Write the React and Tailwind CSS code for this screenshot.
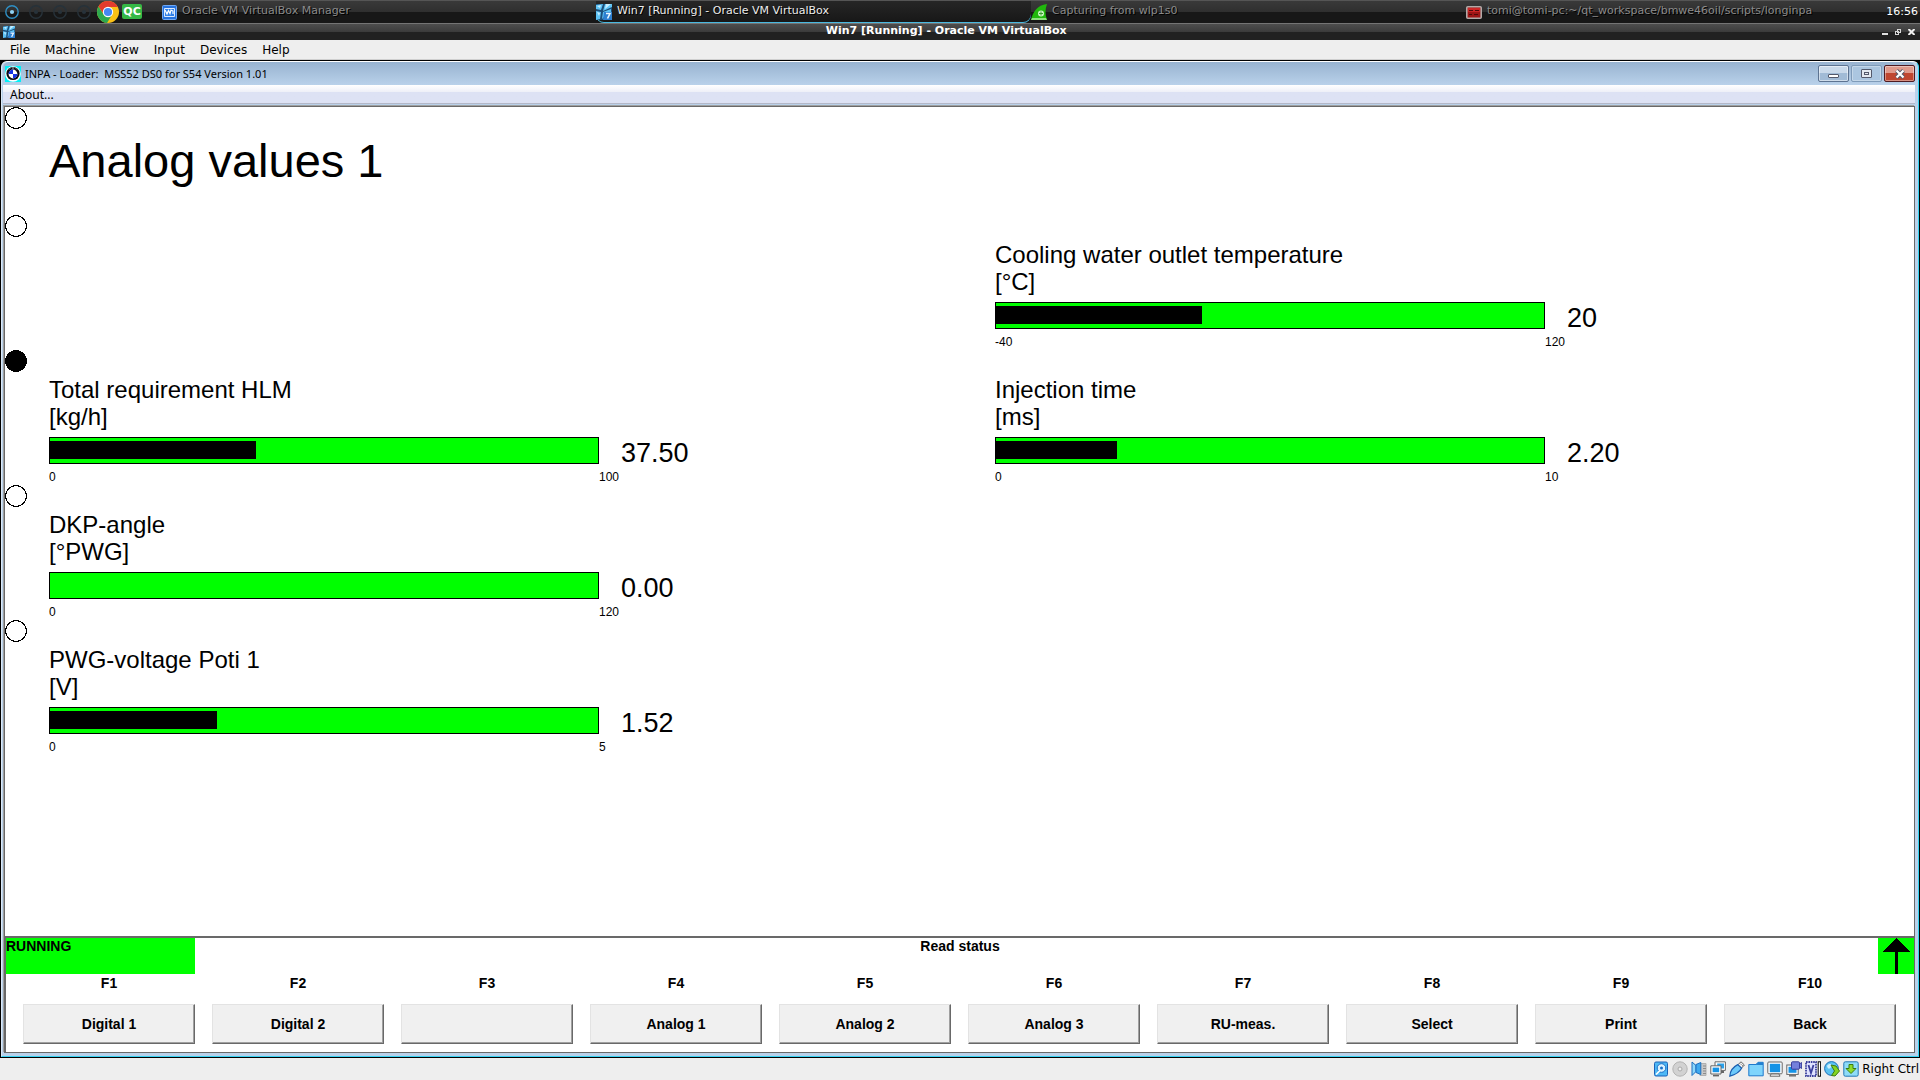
const rows = [
  {
    filled: false,
    left: null,
    right: { label: 'Cooling water outlet temperature', unit: '[°C]', min: -40, max: 120, value: 20, text: '20' },
  },
  {
    filled: true,
    left: { label: 'Total requirement HLM', unit: '[kg/h]', min: 0, max: 100, value: 37.5, text: '37.50' },
    right: { label: 'Injection time', unit: '[ms]', min: 0, max: 10, value: 2.2, text: '2.20' },
  },
  {
    filled: false,
    left: { label: 'DKP-angle', unit: '[°PWG]', min: 0, max: 120, value: 0, text: '0.00' },
    right: null,
  },
  {
    filled: false,
    left: { label: 'PWG-voltage Poti 1', unit: '[V]', min: 0, max: 5, value: 1.52, text: '1.52' },
    right: null,
  },
];

const keys = ['Digital 1', 'Digital 2', '', 'Analog 1', 'Analog 2', 'Analog 3', 'RU-meas.', 'Select', 'Print', 'Back'];
const hostMenus = ['File', 'Machine', 'View', 'Input', 'Devices', 'Help'];

function Dot({ filled }) {
  return (
    <svg width="22" height="22" viewBox="0 0 22 22" className="shrink-0" shapeRendering="crispEdges" aria-hidden="true">
      <circle cx="11" cy="11" r="10.4" fill={filled ? '#000' : '#fff'} stroke="#000" strokeWidth="1" />
    </svg>
  );
}

function Gauge({ data, columns }) {
  const percent = ((data.value - data.min) / (data.max - data.min)) * 100;
  return (
    <section className={'grid content-start pt-[26px] ' + columns}>
      <h2 className="col-span-2 text-[24px] leading-[27px]">
        {data.label}
        <br />
        {data.unit}
      </h2>
      <div className="mt-[7px] flex h-[27px] items-center border border-black bg-[#00ff00]">
        <div className="mb-px h-[18px] bg-black" style={{ width: percent + '%' }} />
      </div>
      <output className="mt-[7px] pl-[22px] text-[27px] leading-[33px]">{data.text}</output>
      <span className="text-[12px] leading-[15px]">{data.min}</span>
      <span className="text-[12px] leading-[15px]">{data.max}</span>
    </section>
  );
}

function Launcher({ dim }) {
  return (
    <svg width="16" height="16" viewBox="0 0 16 16" fill="none" aria-hidden="true">
      <circle cx="8" cy="8" r="6.2" stroke={dim ? '#27323a' : '#2f8fc4'} strokeWidth="1.4" />
      <circle cx="8" cy="8" r="2.1" fill={dim ? '#27323a' : '#8fd3f5'} />
    </svg>
  );
}

function ChromeIcon() {
  return (
    <svg width="22" height="22" viewBox="0 0 22 22" aria-hidden="true">
      <circle cx="11" cy="11" r="11" fill="#fbc116" />
      <path d="M11 6 H20.8 A11 11 0 0 0 1.5 5.5 L6.5 13 Z" fill="#e33b2e" />
      <path d="M1.5 5.5 A11 11 0 0 0 10 22 L15.2 13.6 L6.6 13.4 Z" fill="#2da94f" />
      <circle cx="11" cy="11" r="5.2" fill="#fff" />
      <circle cx="11" cy="11" r="4.1" fill="#4688f4" />
    </svg>
  );
}

function ManagerIcon() {
  return (
    <svg width="15" height="15" viewBox="0 0 15 15" aria-hidden="true">
      <rect x="0.5" y="0.5" width="14" height="14" rx="1" fill="#2672dd" stroke="#6fa8f4" />
      <path d="M2.5 3.5 H12.5 V11.5 H2.5 Z" fill="#2f80ea" stroke="#dcebff" />
      <path d="M3 5 L5 9 L6.5 5.5 L8 8.5 L9 5 L11 6 V9" fill="none" stroke="#fff" strokeWidth="1.2" />
    </svg>
  );
}

function Win7Icon({ size }) {
  return (
    <svg width={size} height={size} viewBox="0 0 16 16" aria-hidden="true">
      <rect width="16" height="16" fill="#1d4e79" />
      <path d="M0 1 L7 0 L5 6 L0 5 Z M9 0 H16 V3 L7 7 Z M0 7 L5 8 L4 15 L0 16 Z M7 8 L15 5 V9 L9 12 L6 15 Z" fill="#5ec3f5" />
      <path d="M10 0 H15 L9 5 Z M1 8 L4 9 L3 12 Z M1 2 L5 1 L4 4 Z" fill="#c5edff" />
      <path d="M8 8 H16 V16 H7 Z" fill="#2d7fd0" />
      <path d="M10 9.5 H14 L11.5 14.5" fill="none" stroke="#e8f6ff" strokeWidth="1.6" />
    </svg>
  );
}

function SharkIcon() {
  return (
    <svg width="16" height="16" viewBox="0 0 16 16" aria-hidden="true">
      <path d="M0 16 C2 8 6 1 16 0 C14 5 14 11 16 16 Z" fill="#20b80c" />
      <path d="M0 16 L1 14 H15 L16 16 Z" fill="#8be07e" />
      <circle cx="10" cy="9.5" r="3" fill="#c9f5c2" />
      <path d="M8 9.5 H12 M10 7.5 V11.5" stroke="#3e9b34" />
    </svg>
  );
}

function TerminalIcon() {
  return (
    <svg width="16" height="13" viewBox="0 0 16 13" aria-hidden="true">
      <rect x="0.8" y="0.8" width="14.4" height="11.4" rx="1" fill="#9d1515" stroke="#b3aaa8" strokeWidth="1.6" />
      <path d="M2 2 H14 V6 H2 Z" fill="#cc2626" />
      <path d="M3 4.5 H7 M9 4.5 H13 M3 8.5 H6 M8 8.5 H12" stroke="#4d0b0b" />
    </svg>
  );
}

function BmwIcon() {
  return (
    <svg width="16" height="16" viewBox="0 0 16 16" aria-hidden="true">
      <rect width="16" height="16" fill="#00f0f8" />
      <circle cx="8" cy="8" r="7.8" fill="#fff" />
      <circle cx="8" cy="7.5" r="6.6" fill="#0b0b14" />
      <path d="M4 3.5 L5 2.5 M7 2 H9 M11 2.5 L12 3.5" stroke="#bbb" />
      <circle cx="8" cy="8" r="4.4" fill="#fff" />
      <path d="M8 8 V3.6 A4.4 4.4 0 0 0 3.6 8 Z M8 8 V12.4 A4.4 4.4 0 0 0 12.4 8 Z" fill="#1432e8" />
    </svg>
  );
}

function Task({ icon, label, active, className }) {
  return (
    <button
      type="button"
      className={'flex h-[22px] items-center gap-[5px] text-left whitespace-nowrap ' + (active ? 'text-[#ececec] ' : 'text-[#8a8a8a] ') + className}
    >
      {icon}
      <span className="pb-[3px] text-[11px] leading-[16px] [text-shadow:1px_1px_0_#000]">{label}</span>
    </button>
  );
}

function HostPanel() {
  return (
    <header className="flex h-[23px] items-start border-t border-[#555] bg-linear-to-b from-[#393939] from-0% via-[#2f2f2f] via-50% to-[#171717] to-50% font-['DejaVu_Sans',sans-serif]">
      <div className="grid w-full grid-cols-[162fr_434fr_435fr_435fr_454fr]">
        <nav className="flex h-[21px] items-center gap-2 pl-1" aria-label="Desktops and launchers">
          <button type="button" aria-label="Desktop 1"><Launcher /></button>
          <button type="button" aria-label="Desktop 2"><Launcher dim /></button>
          <button type="button" aria-label="Desktop 3"><Launcher dim /></button>
          <div className="flex items-center gap-[5px]">
            <button type="button" aria-label="Desktop 4"><Launcher dim /></button>
            <button type="button" aria-label="Chrome"><ChromeIcon /></button>
          </div>
          <button type="button" className="-ml-[5px] h-[15px] w-5 rounded-xs bg-[#35b846] text-[11px] leading-[15px] font-bold text-white">QC</button>
        </nav>
        <Task icon={<ManagerIcon />} label="Oracle VM VirtualBox Manager" className="" />
        <Task
          icon={<Win7Icon size={16} />}
          label="Win7 [Running] - Oracle VM VirtualBox"
          active
          className="rounded-b-lg bg-linear-to-b from-[#262626] to-[#171717] shadow-[0_-1px_0_#49b9e0_inset]"
        />
        <Task icon={<SharkIcon />} label="Capturing from wlp1s0" className="" />
        <div className="flex items-center justify-between pr-[2px]">
          <Task icon={<TerminalIcon />} label="tomi@tomi-pc:~/qt_workspace/bmwe46oil/scripts/longinpa" className="" />
          <time className="text-[11px] leading-[22px] text-white">16:56</time>
        </div>
      </div>
    </header>
  );
}

function HostTitle() {
  return (
    <div className="grid h-[17px] grid-cols-[97fr_auto_100fr] items-center border-t border-[#747474] bg-linear-to-b from-[#4d4d4d] from-0% via-[#3b3b3b] via-50% to-[#212121] to-50% pr-[5px] pl-[3px] font-['DejaVu_Sans',sans-serif]">
      <Win7Icon size={12} />
      <h1 className="pb-[2px] text-[11px] leading-[14px] font-bold text-white">Win7 [Running] - Oracle VM VirtualBox</h1>
      <div className="flex items-center justify-end gap-[7px]">
        <button type="button" aria-label="Minimize" className="h-[6px] w-[6px] border-b-2 border-[#e0e0e0]" />
        <button type="button" aria-label="Restore">
          <svg width="6" height="6" viewBox="0 0 6 6" fill="none" stroke="#d8d8d8" shapeRendering="crispEdges" aria-hidden="true">
            <path d="M2.5 .5 H5.5 V3.5 H2.5 Z M.5 2.5 H3.5 V5.5 H.5 Z" />
          </svg>
        </button>
        <button type="button" aria-label="Close">
          <svg width="7" height="6" viewBox="0 0 7 6" stroke="#eee" strokeWidth="2" aria-hidden="true">
            <path d="M.5 0 L6.5 6 M6.5 0 L.5 6" />
          </svg>
        </button>
      </div>
    </div>
  );
}

function CaptionButtons() {
  return (
    <div className="flex h-full items-start gap-[2px] pt-[3px]">
      <button type="button" aria-label="Minimize" className="flex h-[17px] w-[31px] items-end justify-center rounded-xs border border-[#5d7391] bg-linear-to-b from-[#c9d9ea] from-50% to-[#a1bbd6] to-50% pb-[3px] ring-1 ring-white/50 ring-inset">
        <span className="h-[4px] w-[11px] rounded-[1px] border border-[#53596b] bg-white" />
      </button>
      <button type="button" aria-label="Maximize" className="flex h-[17px] w-[31px] items-center justify-center rounded-xs border border-[#7f9bb9] bg-[#abc6e0] ring-1 ring-white/30 ring-inset">
        <span className="flex h-[9px] w-[11px] items-center justify-center rounded-[1px] border border-[#53596b] bg-[#e3e9f0]">
          <span className="h-[3px] w-[5px] border border-[#53596b]" />
        </span>
      </button>
      <button type="button" aria-label="Close" className="flex h-[17px] w-[31px] items-center justify-center rounded-xs border border-[#4f1b22] bg-linear-to-b from-[#e09a8c] from-50% to-[#bf4630] to-50% ring-1 ring-white/40 ring-inset">
        <svg width="12" height="10" viewBox="0 0 12 10" aria-hidden="true">
          <path d="M2.5 1.5 L9.5 8.5 M9.5 1.5 L2.5 8.5" stroke="#53596b" strokeWidth="4" />
          <path d="M2.5 1.5 L9.5 8.5 M9.5 1.5 L2.5 8.5" stroke="#fff" strokeWidth="2.2" />
        </svg>
      </button>
    </div>
  );
}

const statusIcons = [
  <g key="hd">
    <rect x="1.5" y="1" width="13" height="14" rx="1.5" fill="#4db8f5" stroke="#1a62b8" />
    <circle cx="8.5" cy="7" r="4.3" fill="#d9f2ff" stroke="#1a6fc8" />
    <circle cx="8.5" cy="7" r="1.5" fill="#1a6fc8" />
    <path d="M3 13.5 L7 9.5" stroke="#fff" strokeWidth="1.6" />
  </g>,
  <g key="cd">
    <circle cx="8" cy="8" r="7.2" fill="#d2d2d2" stroke="#b3b3b3" />
    <circle cx="8" cy="8" r="2" fill="#eee" stroke="#aaa" />
  </g>,
  <g key="audio">
    <path d="M9 2.5 H15 V14.5 H9 Z" fill="#c8c8c8" stroke="#b0b0b0" />
    <path d="M12 5 H15 M12 7.5 H15 M12 10 H15 M12 12.5 H15" stroke="#8b8b8b" />
    <path d="M1 1 L5 4.5 V10.5 L1 14.5 Z" fill="#8ed8fb" stroke="#1d6fc0" />
    <path d="M5 3.5 L9.8 1.5 V13.5 L5 11.5 Z" fill="#3fa9ee" stroke="#1d6fc0" />
  </g>,
  <g key="net">
    <path d="M6 1.2 H15.2 V8.8 H6 Z" fill="#29a0ea" stroke="#fff" strokeWidth="2.4" />
    <path d="M5 .8 H15.4 V9.4 H5 Z" fill="none" stroke="#666" />
    <path d="M10 11 H14" stroke="#666" strokeWidth="2" />
    <path d="M.8 4.8 H11 V13 H.8 Z" fill="#fff" stroke="#666" />
    <path d="M2.6 6.6 H9.2 V11.2 H2.6 Z" fill="#1593e6" />
    <path d="M3 14.6 H9" stroke="#666" strokeWidth="1.6" />
  </g>,
  <g key="usb">
    <path d="M8.8 3.8 L12 .8 L15.4 4 L12.4 7.2 Z" fill="#f2f2f2" stroke="#666" />
    <path d="M11.5 2.8 L12.3 3.6 M13 4.3 L13.8 5" stroke="#555" />
    <path d="M.8 15.2 C1 10.5 4 6 8.8 3.6 L12.6 7.2 C10 12 5 14 .8 15.2 Z" fill="#6cc9fa" stroke="#1a5eb0" strokeWidth="1.2" />
  </g>,
  <g key="folder">
    <path d="M.8 3.5 H8 L10 1.3 H15.2 V14.8 H.8 Z" fill="#7ed4fc" stroke="#1f79cc" />
    <path d="M8 3.5 L10 1.5 H15 V4 H8 Z" fill="#2280d0" />
  </g>,
  <g key="display">
    <rect x=".8" y="1" width="14.4" height="11.8" rx="1" fill="#fff" stroke="#666" />
    <rect x="2.8" y="2.8" width="10.4" height="8.4" fill="#1593e6" />
    <path d="M4 13 H12 L13 15.2 H3 Z" fill="#fff" stroke="#666" />
  </g>,
  <g key="record">
    <rect x=".8" y="4" width="11.4" height="9.4" fill="#fff" stroke="#666" />
    <path d="M2.5 5.8 H10.5 V11.8 H2.5 Z" fill="#1593e6" />
    <path d="M3 14.8 H10" stroke="#666" strokeWidth="1.4" />
    <rect x="5.5" y=".8" width="8" height="7.4" rx="1" fill="#7480dc" stroke="#3a3f9c" />
    <path d="M13.5 3 L15.6 1.5 V7.5 L13.5 6 Z" fill="#7480dc" stroke="#3a3f9c" />
  </g>,
  <g key="cpu">
    <rect x="1" y="1" width="10" height="14" fill="#dfe2ff" stroke="#3a3f9c" strokeWidth="1.8" strokeDasharray="1.6 .8" />
    <path d="M3.5 4 L6 12 L8.5 4" fill="none" stroke="#3a3f9c" strokeWidth="1.8" />
    <rect x="13.2" y=".8" width="2.4" height="14.4" fill="#fff" stroke="#000" />
  </g>,
  <g key="mouse">
    <circle cx="7.5" cy="7.5" r="6.9" fill="#5bc2f2" stroke="#1d6fb8" />
    <path d="M3 5 C5 2 8 3 8 5 C6 8 4 9 3 5" fill="#c8efff" />
    <path d="M7 4 L12 5 L15.5 10 L11 15 L7.5 14.5 L10.5 10 Z" fill="#85d422" stroke="#3f7c10" />
  </g>,
  <g key="host">
    <rect x=".8" y=".8" width="14.4" height="14.4" rx="1.5" fill="#8fdcf8" stroke="#2577b5" />
    <path d="M6 3.5 H10 V7.5 H13 L8 12.5 L3 7.5 H6 Z" fill="#8ddb2c" stroke="#3b7d0e" />
  </g>,
];

export default function App() {
  return (
    <div className="flex min-h-screen flex-col bg-[#eeeeee] text-black">
      <HostPanel />
      <HostTitle />
      <nav aria-label="Machine menu" className="flex h-5 items-center gap-[15px] border-b border-[#cfcfcf] pl-[10px] font-['DejaVu_Sans',sans-serif] text-[12px] leading-[16px]">
        {hostMenus.map((item) => (
          <button key={item} type="button">{item}</button>
        ))}
      </nav>

      <main className="flex flex-1 flex-col border border-black bg-black">
        <div className="flex flex-1 flex-col rounded-t-md border-t border-r border-b border-l border-t-white border-r-[#35d3f2] border-b-[#35d3f2] border-l-[#dbe9f7] bg-[#b9d1ea] pr-[3px] pb-[3px] pl-[1px]">
          <div className="flex h-[23px] items-center justify-between rounded-t-md bg-linear-to-b from-[#98b3d0] to-[#b9d1ea]">
            <div className="flex items-center gap-1 pl-[2px]">
              <BmwIcon />
              <span className="text-[11px] leading-[16px] whitespace-pre font-['Noto_Sans',sans-serif]">INPA - Loader:  MSS52 DS0 for S54 Version 1.01</span>
            </div>
            <CaptionButtons />
          </div>
          <nav aria-label="Application menu" className="flex h-[19px] items-end border-b border-[#b4b8c8] bg-linear-to-b from-white from-0% via-[#eef0f8] via-38% to-[#dde2f4] to-38% pl-[7px]">
            <button type="button" className="text-[12px] leading-[16px] font-['Noto_Sans',sans-serif]">About...</button>
          </nav>

          <div className="mt-[2px] ml-px flex flex-1 flex-col border border-[#696969] bg-white font-['Liberation_Sans',Arial,sans-serif] shadow-[-1px_-1px_0_#a0a0a0]">
            <div className="flex-1">
              <div className="flex min-h-[108px]">
                <div className="w-11 shrink-0"><Dot /></div>
                <h2 className="pt-[27px] text-[47px] leading-[54px]">Analog values 1</h2>
              </div>
              {rows.map((row, index) => (
                <div key={index} className="flex min-h-[135px]">
                  <div className="w-11 shrink-0"><Dot filled={row.filled} /></div>
                  <div className="grid flex-1 grid-cols-[946fr_919fr]">
                    {row.left ? <Gauge data={row.left} columns="grid-cols-[550fr_396fr]" /> : <div />}
                    {row.right ? <Gauge data={row.right} columns="grid-cols-[550fr_369fr]" /> : <div />}
                  </div>
                </div>
              ))}
            </div>

            <footer className="border-t-2 border-l border-[#696969] pb-2 text-[14px] leading-[16px] font-bold">
              <div className="grid h-9 grid-cols-[189px_1fr_189px]">
                <div className="bg-[#00ff00]">RUNNING</div>
                <div className="text-center">Read status</div>
                <div className="flex h-9 w-9 justify-center justify-self-end bg-[#00ff00]">
                  <svg width="28" height="36" viewBox="0 0 28 36" shapeRendering="crispEdges" aria-hidden="true">
                    <path d="M14 0 L28 14 H0 Z M12.5 13 H15.5 V36 H12.5 Z" />
                  </svg>
                </div>
              </div>
              <div className="grid grid-cols-10 gap-[17px] pr-[18px] pl-[17px]">
                {keys.map((name, index) => (
                  <div key={index} className="flex flex-col">
                    <label htmlFor={'key-' + (index + 1)} className="text-center leading-[18px]">F{index + 1}</label>
                    <button
                      id={'key-' + (index + 1)}
                      type="button"
                      className="mt-3 h-10 border border-t-[#e3e3e3] border-r-[#696969] border-b-[#696969] border-l-[#e3e3e3] bg-[#f0f0f0] shadow-[inset_-1px_-1px_0_#a0a0a0]"
                    >
                      {name}
                    </button>
                  </div>
                ))}
              </div>
            </footer>
          </div>
        </div>
      </main>

      <footer className="flex h-[22px] items-center justify-end gap-[3px] pr-px font-['DejaVu_Sans',sans-serif] text-[12px]">
        {statusIcons.map((drawing, index) => (
          <svg key={index} width="16" height="16" viewBox="0 0 16 16" aria-hidden="true">{drawing}</svg>
        ))}
        <span>Right Ctrl</span>
      </footer>
    </div>
  );
}
